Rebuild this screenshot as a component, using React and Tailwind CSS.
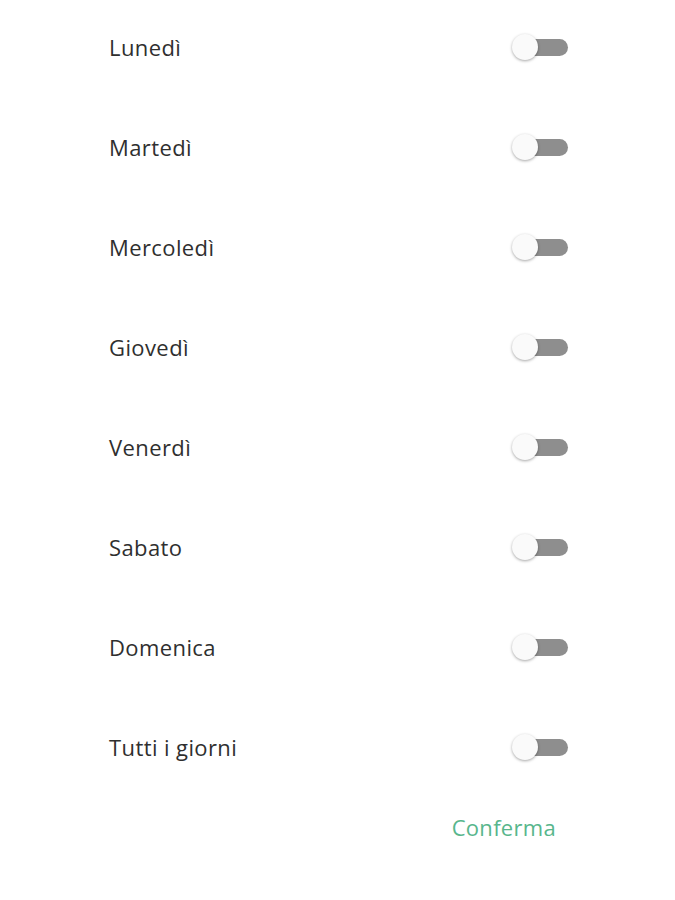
const days = ['Lunedì', 'Martedì', 'Mercoledì', 'Giovedì', 'Venerdì', 'Sabato', 'Domenica', 'Tutti i giorni'];

function Toggle() {
  return (
    <div className="relative w-[56px] h-[26px] flex items-center">
      <div className="absolute right-0 w-[49px] h-[17px] rounded-full bg-[#8e8e8e]" />
      <div className="absolute left-0 w-[26px] h-[26px] rounded-full bg-[#fafafa] shadow-[0_1px_3px_rgba(0,0,0,0.35)]" />
    </div>
  );
}

export default function App() {
  return (
    <div className="w-[675px] h-[900px] bg-white font-['Open_Sans',sans-serif]">
      <div className="pl-[109px] pr-[107px] pt-[19px] flex flex-col gap-[44px]">
        {days.map(d => (
          <div key={d} className="h-[56px] flex items-center justify-between">
            <span className="text-[22px] tracking-[0.4px] text-[#2f2f2f]">{d}</span>
            <Toggle />
          </div>
        ))}
      </div>
      <div className="flex justify-end pr-[119px] mt-[38px]">
        <span className="text-[22px] tracking-[0.3px] text-[#58b68c] leading-[28px]">Conferma</span>
      </div>
    </div>
  );
}
